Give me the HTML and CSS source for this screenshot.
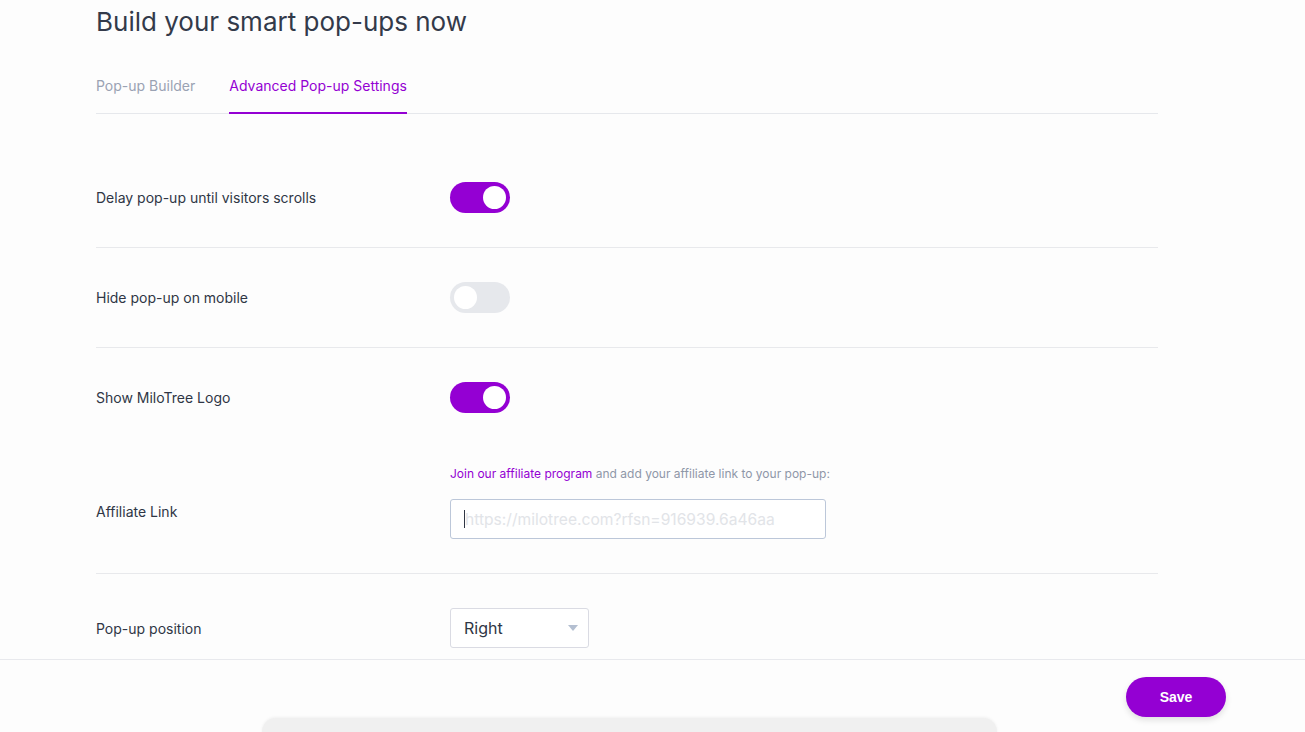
FILE: index.html
```html
<!DOCTYPE html>
<html lang="en">
<head>
    <meta charset="UTF-8">
    <meta name="viewport" content="width=device-width, initial-scale=1.0">
    <title>Build your smart pop-ups now</title>
    <link rel="stylesheet" href="styles.css">
</head>
<body>
    <div class="container">
        <h1 class="title">Build your smart pop-ups now</h1>
        <div class="tabs">
            <a class="tab">Pop-up Builder</a>
            <a class="tab active">Advanced Pop-up Settings</a>
        </div>

        <div class="settings">
            <div class="row">
                <div class="label">Delay pop-up until visitors scrolls</div>
                <label class="toggle on"><span class="knob"></span></label>
            </div>
            <div class="row">
                <div class="label">Hide pop-up on mobile</div>
                <label class="toggle"><span class="knob"></span></label>
            </div>
            <div class="row no-border">
                <div class="label">Show MiloTree Logo</div>
                <label class="toggle on"><span class="knob"></span></label>
            </div>
            <div class="row affiliate">
                <div class="label">Affiliate Link</div>
                <div class="field">
                    <p class="hint"><a class="link">Join our affiliate program</a> and add your affiliate link to your pop-up:</p>
                    <div class="input"><span class="caret"></span><span class="placeholder">https://milotree.com?rfsn=916939.6a46aa</span></div>
                </div>
            </div>
            <div class="row no-border">
                <div class="label">Pop-up position</div>
                <div class="select">
                    <span>Right</span>
                    <span class="arrow"></span>
                </div>
            </div>
        </div>
    </div>

    <div class="footer">
        <button class="save-button">Save</button>
        <div class="preview"></div>
    </div>
</body>
</html>
```

FILE: styles.css
```css
body {
    margin: 0;
    font-family: Inter, "Noto Sans", Arial, sans-serif;
    background-color: #fdfdfd;
    color: #2f3645;
    overflow: hidden;
    height: 732px;
}
.container {
    width: 1062px;
    margin-left: 96px;
}
.title {
    margin: 0;
    padding-top: 6px;
    font-size: 26px;
    font-weight: 400;
    line-height: 32px;
    color: #333a4a;
}
.tabs {
    display: flex;
    gap: 34px;
    margin-top: 38px;
    border-bottom: 1px solid #e6e8ec;
}
.tab {
    font-size: 14px;
    line-height: 20px;
    padding-bottom: 16px;
    color: #9aa2b3;
    border-bottom: 2px solid transparent;
    margin-bottom: -1px;
}
.tab.active {
    color: #9400d3;
    border-bottom-color: #9400d3;
}
.settings {
    margin-top: 34px;
}
.row {
    display: flex;
    align-items: center;
    padding: 34px 0 34px;
    border-bottom: 1px solid #e8e9ec;
}
.row.no-border {
    border-bottom: none;
}
.label {
    width: 354px;
    font-size: 14px;
    color: #2f3645;
}
.toggle {
    display: block;
    position: relative;
    width: 60px;
    height: 31px;
    border-radius: 16px;
    background-color: #e6e8ec;
}
.toggle.on {
    background-color: #9400d3;
}
.knob {
    position: absolute;
    top: 4px;
    left: 4px;
    width: 23px;
    height: 23px;
    border-radius: 50%;
    background-color: white;
}
.toggle.on .knob {
    left: 33px;
}
.affiliate {
    padding-top: 19px;
}
.affiliate .label {
    padding-top: 18px;
}
.hint {
    margin: 0 0 17px;
    font-size: 12px;
    line-height: 16px;
    color: #8f97a8;
}
.link {
    color: #9400d3;
}
.input {
    display: flex;
    align-items: center;
    box-sizing: border-box;
    width: 376px;
    height: 40px;
    padding: 0 13px;
    border: 1px solid #bcc7d9;
    border-radius: 3px;
    background-color: white;
}
.caret {
    width: 1px;
    height: 18px;
    background-color: #2f3645;
}
.placeholder {
    font-size: 15.6px;
    color: #e2e4e8;
}
.select {
    display: flex;
    align-items: center;
    justify-content: space-between;
    box-sizing: border-box;
    width: 139px;
    height: 40px;
    padding: 0 10px 0 13px;
    border: 1px solid #dadbe3;
    border-radius: 3px;
    background-color: white;
    font-size: 16px;
    color: #2f3645;
}
.arrow {
    width: 0;
    height: 0;
    border-left: 5px solid transparent;
    border-right: 5px solid transparent;
    border-top: 6px solid #b4bfd1;
}
.footer {
    position: fixed;
    left: 0;
    right: 0;
    bottom: 0;
    height: 72px;
    border-top: 1px solid #e8e9ed;
    background-color: #fdfdfd;
    display: flex;
    justify-content: flex-end;
    align-items: flex-start;
    padding-right: 79px;
}
.save-button {
    margin-top: 17px;
    width: 100px;
    height: 40px;
    border: none;
    border-radius: 20px;
    background-color: #9400d3;
    color: white;
    font-family: "Liberation Sans", Arial, sans-serif;
    font-weight: bold;
    font-size: 14px;
    box-shadow: 0 3px 6px rgba(0,0,0,0.12);
}
.preview {
    position: absolute;
    left: 262px;
    top: 58px;
    width: 735px;
    height: 40px;
    border-radius: 14px 14px 0 0;
    background-color: #f0f0f0;
    box-shadow: 0 -1px 3px rgba(0,0,0,0.05);
}
```
